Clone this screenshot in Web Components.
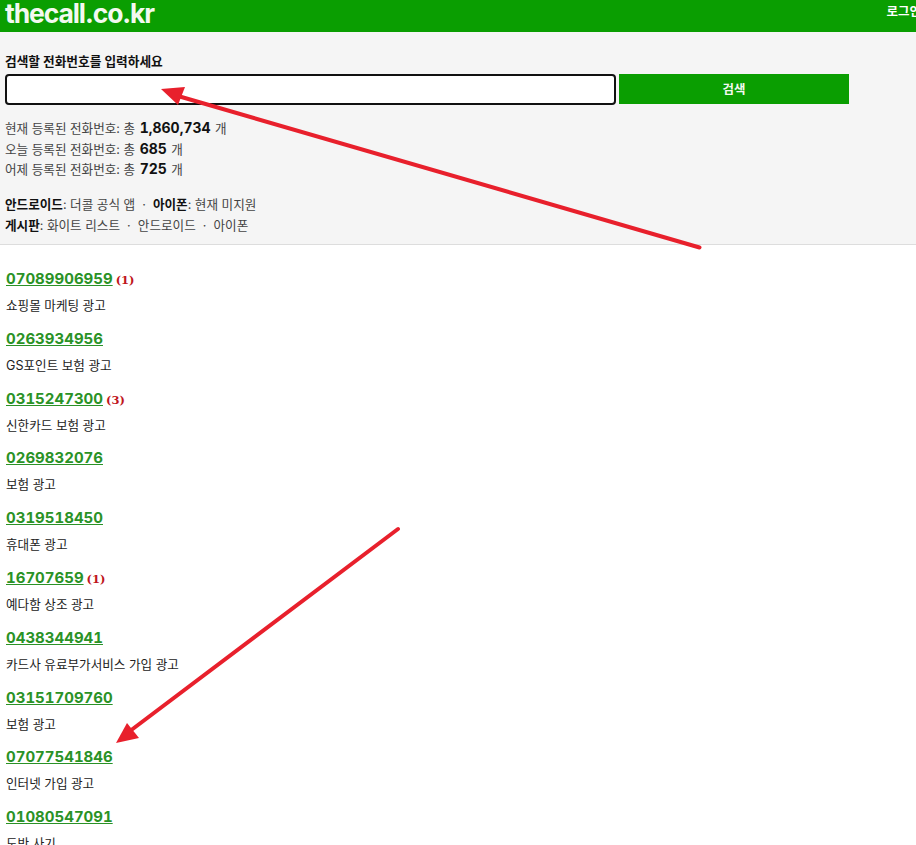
<!DOCTYPE html>
<html lang="ko">
<head>
<meta charset="utf-8">
<title>thecall.co.kr</title>
<style>
html,body{margin:0;padding:0;height:845px;overflow:hidden;background:#fff}
body{position:relative;font-family:Inter,"Noto Sans CJK KR",sans-serif;color:#222}
</style>
</head>
<body>
<site-header></site-header>
<search-panel></search-panel>
<phone-list>
<phone-entry number="07089906959" count="1">쇼핑몰 마케팅 광고</phone-entry>
<phone-entry number="0263934956">GS포인트 보험 광고</phone-entry>
<phone-entry number="0315247300" count="3">신한카드 보험 광고</phone-entry>
<phone-entry number="0269832076">보험 광고</phone-entry>
<phone-entry number="0319518450">휴대폰 광고</phone-entry>
<phone-entry number="16707659" count="1">예다함 상조 광고</phone-entry>
<phone-entry number="0438344941">카드사 유료부가서비스 가입 광고</phone-entry>
<phone-entry number="03151709760">보험 광고</phone-entry>
<phone-entry number="07077541846">인터넷 가입 광고</phone-entry>
<phone-entry number="01080547091">도박 사기</phone-entry>
</phone-list>
<annotation-arrows></annotation-arrows>
<script>
function def(name, html){
  customElements.define(name, class extends HTMLElement{
    constructor(){super();this.attachShadow({mode:'open'}).innerHTML=typeof html==='function'?html(this):html;}
  });
}
def('site-header',`<style>
:host{display:flex;justify-content:space-between;align-items:center;box-sizing:border-box;width:926px;height:32px;background:#0a9e01;color:#fff;padding:0 4px 0 5px;overflow:hidden}
.logo{font:700 26.5px/30px Inter,sans-serif;letter-spacing:-1.1px;margin-top:-6px;color:#f3f9f0}
.login{font:700 12.5px/16px Inter,"Noto Sans CJK KR",sans-serif;margin-top:-8px;margin-right:1px}
</style><span class="logo">thecall.co.kr</span><span class="login">로그인</span>`);
def('search-panel',`<style>
:host{display:block;box-sizing:border-box;height:213px;background:#f5f5f5;border-bottom:1px solid #ddd;padding:21px 5px 0;font:12.6px/20.5px Inter,"Noto Sans CJK KR",sans-serif;color:#444}
label{display:block;font-weight:700;font-size:12.7px;line-height:16px;color:#111;margin-bottom:5px;position:relative;top:1px}
.row{display:flex;gap:3px;align-items:flex-start;margin-bottom:13px}
.in{box-sizing:border-box;width:611px;height:31px;border:2px solid #111;border-radius:4px;background:#fff}
button{width:230px;height:30px;border:0;padding:0 0 1px;background:#0a9e01;color:#f3f9f0;font:700 12.5px Inter,"Noto Sans CJK KR",sans-serif}
.stats{margin-bottom:14.5px}
.stats div,.links div{height:20.5px;white-space:nowrap}
.stats b{font-size:14px;color:#111;font-feature-settings:"tnum";margin:0 1px 0 1px}
.links{padding-top:1px}
.links b{color:#111}
</style>
<label>검색할 전화번호를 입력하세요</label>
<div class="row"><div class="in"></div><button>검색</button></div>
<div class="stats">
<div>현재 등록된 전화번호: 총 <b>1,860,734</b> 개</div>
<div>오늘 등록된 전화번호: 총 <b>685</b> 개</div>
<div>어제 등록된 전화번호: 총 <b>725</b> 개</div>
</div>
<div class="links">
<div><b>안드로이드</b>: 더콜 공식 앱 &nbsp;·&nbsp; <b>아이폰</b>: 현재 미지원</div>
<div><b>게시판</b>: 화이트 리스트 &nbsp;·&nbsp; 안드로이드 &nbsp;·&nbsp; 아이폰</div>
</div>`);
def('phone-list',`<style>:host{display:block;padding:23px 6px 0}</style><slot></slot>`);
def('phone-entry',el=>{
  const c=el.getAttribute('count');
  return `<style>
:host{display:block;height:59.8px;overflow:visible;white-space:nowrap}
a{font:700 15px/20px Inter,sans-serif;font-feature-settings:"tnum";color:#2a9226;text-decoration:underline}
.n{font:700 13px/20px "DejaVu Serif",serif;font-size:11.5px;color:#c0141c;margin-left:3px}
.top{height:20px;margin-bottom:8px}
.d{font:12.6px/20px Inter,"Noto Sans CJK KR",sans-serif;color:#222}
</style><div class="top"><a>${el.getAttribute('number')}</a>${c?`<span class="n">(${c})</span>`:''}</div><div class="d"><slot></slot></div>`;
});
def('annotation-arrows',`<style>
:host{position:absolute;left:0;top:0;width:916px;height:845px;pointer-events:none}
svg{display:block}
</style><svg width="916" height="845" viewBox="0 0 916 845" fill="#e8202c" stroke="none">
<line x1="699.5" y1="247.5" x2="178" y2="96" stroke="#e8202c" stroke-width="4" stroke-linecap="round"/>
<polygon points="161,89 185,87 178,105"/>
<line x1="398" y1="529" x2="130" y2="731" stroke="#e8202c" stroke-width="4" stroke-linecap="round"/>
<polygon points="116,743 127,723 139,738"/>
</svg>`);
</script>
</body>
</html>
